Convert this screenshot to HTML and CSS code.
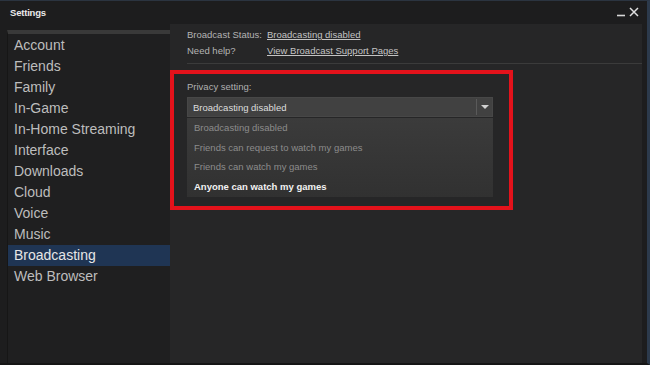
FILE: index.html
```html
<!DOCTYPE html>
<html lang="en">
<head>
    <meta charset="UTF-8">
    <meta name="viewport" content="width=device-width, initial-scale=1.0">
    <title>Settings</title>
    <link rel="stylesheet" href="styles.css">
</head>
<body>
    <div class="window">
        <div class="titlebar">
            <span class="title">Settings</span>
            <div class="controls">
                <svg class="ctl" width="10" height="10" viewBox="0 0 10 10"><path d="M1 8.5h8" stroke="#d8d8d8" stroke-width="1.6"/></svg>
                <svg class="ctl" width="10" height="10" viewBox="0 0 10 10"><path d="M1 1l8 8M9 1l-8 8" stroke="#e0e0e0" stroke-width="1.5"/></svg>
            </div>
        </div>

        <div class="main">
            <ul class="nav">
                <li>Account</li>
                <li>Friends</li>
                <li>Family</li>
                <li>In-Game</li>
                <li>In-Home Streaming</li>
                <li>Interface</li>
                <li>Downloads</li>
                <li>Cloud</li>
                <li>Voice</li>
                <li>Music</li>
                <li class="active">Broadcasting</li>
                <li>Web Browser</li>
            </ul>

            <div class="content">
                <div class="status">
                    <div class="row"><span class="key">Broadcast Status:</span><a href="#">Broadcasting disabled</a></div>
                    <div class="row"><span class="key">Need help?</span><a href="#">View Broadcast Support Pages</a></div>
                </div>
                <div class="divider"></div>

                <div class="highlight">
                    <div class="label">Privacy setting:</div>
                    <div class="select">
                        <span>Broadcasting disabled</span>
                        <span class="arrow">
                            <svg width="8" height="5" viewBox="0 0 8 5"><path d="M0 0h8L4 4z" fill="#d0d0d0"/></svg>
                        </span>
                    </div>
                    <ul class="options">
                        <li>Broadcasting disabled</li>
                        <li>Friends can request to watch my games</li>
                        <li>Friends can watch my games</li>
                        <li class="hover">Anyone can watch my games</li>
                    </ul>
                </div>
            </div>
        </div>
    </div>
</body>
</html>
```

FILE: styles.css
```css
* {
    box-sizing: border-box;
}
body {
    margin: 0;
    background: #111;
    font-family: "Liberation Sans", Arial, sans-serif;
}
.window {
    width: 650px;
    height: 365px;
    background: #1d1d1e;
    border-top: 1px solid #2b3440;
    border-right: 3px solid #2c3a4c;
    border-bottom: 2px solid #151515;
    display: flex;
    flex-direction: column;
}
.titlebar {
    height: 23px;
    display: flex;
    align-items: center;
    justify-content: space-between;
    padding: 0 8px 0 10px;
}
.title {
    color: #eaeaea;
    font-size: 9.5px;
    font-weight: bold;
    letter-spacing: -0.2px;
}
.controls {
    display: flex;
    gap: 3px;
    margin-top: -1px;
}
.main {
    flex: 1;
    display: flex;
    margin: 0 5px 0 7px;
}
.nav {
    list-style: none;
    margin: 6px 0 0 0;
    padding: 1px 0 0 0;
    width: 163px;
    background: #1f1f20;
    border-top: 4px solid #393939;
    border-left: 1px solid #161616;
}
.nav li {
    height: 21px;
    line-height: 21px;
    padding-left: 6px;
    font-size: 14px;
    color: #bdbdbd;
}
.nav li.active {
    background: #1f3554;
    color: #e6e6e6;
}
.content {
    flex: 1;
    background: #262627;
    padding-top: 3px;
}
.status {
    padding-left: 17px;
}
.row {
    height: 16px;
    line-height: 16px;
    font-size: 9.5px;
    color: #b4b4b4;
    display: flex;
}
.key {
    width: 80px;
}
.row a {
    color: #c4c4c4;
    text-decoration: underline;
}
.divider {
    margin: 4px 0 0 17px;
    height: 1px;
    background: #3b3b3b;
}
.highlight {
    margin-top: 6px;
    width: 343px;
    height: 140px;
    border: 4px solid #e3121b;
    padding: 7px 16px 0 13px;
}
.label {
    font-size: 9.5px;
    color: #b0b0b0;
    height: 12px;
    line-height: 12px;
}
.select {
    margin-top: 4px;
    height: 20px;
    background: #414141;
    border: 1px solid #474747;
    display: flex;
    align-items: center;
    justify-content: space-between;
    padding-left: 5px;
    font-size: 9.5px;
    color: #dedede;
}
.arrow {
    width: 16px;
    height: 16px;
    border-left: 1px solid #5a5a5a;
    display: flex;
    align-items: center;
    justify-content: center;
}
.options {
    list-style: none;
    margin: 1px 0 0 0;
    padding: 0;
    height: 79px;
    background: linear-gradient(#3b3b3b, #313131);
}
.options li {
    height: 19.5px;
    line-height: 19.5px;
    padding-left: 7px;
    font-size: 9.5px;
    color: #8c8c8c;
}
.options li.hover {
    color: #f2f2f2;
    font-weight: bold;
}
```
